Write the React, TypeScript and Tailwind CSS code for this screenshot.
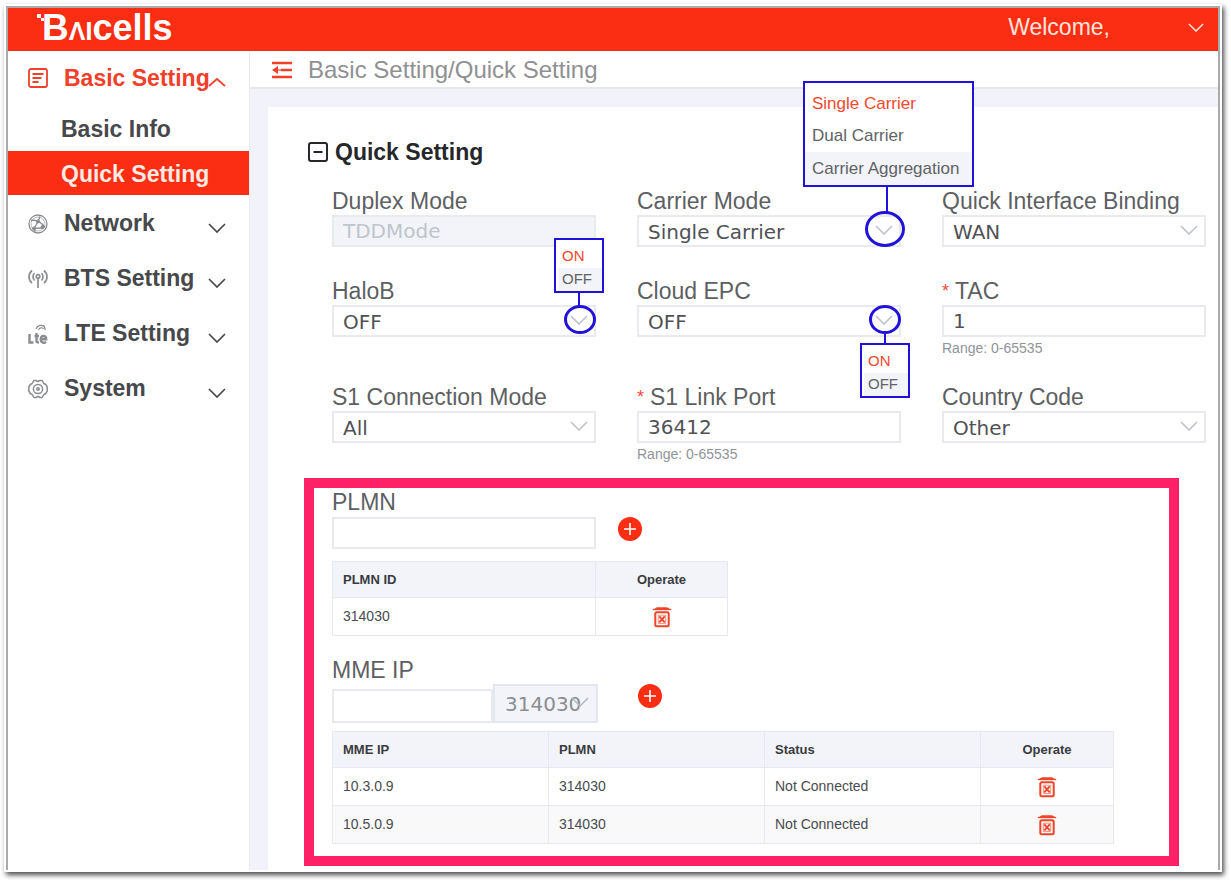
import { useId, type ReactNode } from "react";

function Chevron({ className, up }: { className?: string; up?: boolean }) {
  return (
    <svg viewBox="0 0 18 10" className={className} fill="none" stroke="currentColor" strokeWidth="1.7" aria-hidden="true">
      <path d={up ? "M1 9 9 2l8 7" : "M1 1l8 8 8-8"} />
    </svg>
  );
}

function ListIcon() {
  return (
    <svg viewBox="0 0 20 20" className="h-5 w-5" fill="none" stroke="currentColor" strokeWidth="1.8" aria-hidden="true">
      <rect x="1" y="1" width="18" height="18" rx="2" />
      <path d="M4.5 6h11M4.5 10h9M4.5 14h6" />
    </svg>
  );
}

function NetworkIcon() {
  return (
    <svg viewBox="0 0 20 20" className="h-5 w-5" fill="none" stroke="currentColor" strokeWidth="1.3" aria-hidden="true">
      <circle cx="10" cy="10" r="9" />
      <circle cx="10" cy="10" r="7" strokeWidth=".6" />
      <path d="M3 6.500c5-1 10 1 14 7M10 7.500 6 14.500M6 14.500l8-.5M10 7.500 12 2.500M6 14.500l1 3.500" />
      <circle cx="10" cy="7.500" r="1.300" fill="currentColor" />
      <circle cx="6" cy="14.500" r="1.300" fill="currentColor" />
      <circle cx="14.500" cy="13" r="1.300" fill="currentColor" />
    </svg>
  );
}

function AntennaIcon() {
  return (
    <svg viewBox="0 0 20 20" className="h-5 w-5" fill="none" stroke="currentColor" strokeWidth="1.7" aria-hidden="true">
      <circle cx="10" cy="7.500" r="1.800" />
      <path d="M10 9.500V19M6.500 4c-2 2-2 5.500 0 7.500M13.500 4c2 2 2 5.500 0 7.500M4 1.500c-4 3.500-4 9 0 12.500M16 1.500c4 3.500 4 9 0 12.500" />
    </svg>
  );
}

function LteIcon() {
  return (
    <svg viewBox="0 0 20 20" className="h-5 w-5" fill="none" stroke="currentColor" strokeWidth="2.400" aria-hidden="true">
      <path d="M1.500 10v8.500h4M8.500 9v8q0 1.500 2.500 1.500M6.500 12H11M13.500 15.300h4.700c0-4.500-5.400-4.500-5.400 0 0 4 3.700 3.800 5.400 2.700" />
      <path d="M8 5c1.500-4 6.500-5 9-1.500M10.500 6c1-2.500 3.500-3 5-1M15.500 1l2 5" strokeWidth="1.200" />
    </svg>
  );
}

function GearIcon() {
  return (
    <svg viewBox="0 0 20 20" className="h-5 w-5" fill="none" stroke="currentColor" strokeWidth="1.500" strokeLinejoin="round" aria-hidden="true">
      <path d="M5.800 1.500h2.200l2 1 2-1h2.200l1.600 3 1.900 1L19.200 8v4l-1.500 2.500-1.900 1-1.600 3H12l-2-1-2 1H5.800l-1.600-3-1.900-1L.8 12V8l1.500-2.500 1.900-1z" />
      <circle cx="10" cy="10" r="4.600" />
      <circle cx="10" cy="10" r="1.200" />
    </svg>
  );
}

function TrashIcon() {
  return (
    <svg viewBox="0 0 20 22" className="h-[22px] w-5" fill="none" stroke="currentColor" aria-hidden="true">
      <path d="M.8 3.800 5 1.200h10l4.200 2.600z" fill="currentColor" stroke="none" />
      <path d="M.8 3.500h18.400" strokeWidth="1.300" />
      <rect x="3.300" y="6.200" width="13.400" height="14" rx="1.500" strokeWidth="2" />
      <path d="M7.300 10.300l5.400 6M12.700 10.300l-5.400 6" strokeWidth="1.900" />
      <path d="M6.300 9.200h7.400v8.200H6.300z" strokeWidth=".6" />
    </svg>
  );
}

function AddButton({ label, className }: { label: string; className: string }) {
  return (
    <button type="button" aria-label={label} className={`grid h-6 w-6 place-items-center rounded-full bg-[#fb2d12] ${className}`}>
      <svg viewBox="0 0 12 12" className="h-3 w-3" stroke="#fff" strokeWidth="1.600" aria-hidden="true">
        <path d="M6 0v12M0 6h12" />
      </svg>
    </button>
  );
}

function Field({ label, required, hint, value, type, options, children }: {
  label: string;
  required?: boolean;
  hint?: string;
  value: string;
  type: "select" | "text" | "disabled";
  options?: string[];
  children?: ReactNode;
}) {
  const id = useId();
  const box = "h-8 w-full border-2 border-[#e9eaee] px-[9px] font-['DejaVu_Sans',sans-serif] text-[20px]";
  return (
    <div>
      <label htmlFor={id} className="flex h-7 items-center whitespace-nowrap text-[23px] text-[#5d5f63]">
        {required && <span className="mr-[6px] h-6 text-[18px] leading-6 text-[#f5483b]">*</span>}
        {label}
      </label>
      <div className="relative h-[33px]">
        {type === "select" ? (
          <>
            <select id={id} defaultValue={value} className={`${box} appearance-none bg-white text-[#505155]`}>
              {(options ?? [value]).map((o) => (
                <option key={o}>{o}</option>
              ))}
            </select>
            <Chevron className="pointer-events-none absolute top-[10px] right-2 h-[10px] w-[18px] text-[#c0c4cc]" />
          </>
        ) : (
          <input
            id={id}
            type="text"
            defaultValue={value}
            disabled={type === "disabled"}
            className={`${box} ${type === "disabled" ? "bg-[#f2f4f9] text-[#c0c4cc]" : "bg-white text-[#505155]"}`}
          />
        )}
        {children}
      </div>
      {hint && <p className="h-4 text-[14px] leading-5 text-[#909399]">{hint}</p>}
    </div>
  );
}

function ToggleOptions() {
  return (
    <ul className="flex h-full flex-col text-[15px]">
      <li className="flex flex-1 items-center pt-1 pl-1 text-[#f5482e]">ON</li>
      <li className="flex flex-1 items-center bg-[#f2f4f9] pl-1 text-[#606266]">OFF</li>
    </ul>
  );
}

const menu = [
  { name: "Network", icon: <NetworkIcon /> },
  { name: "BTS Setting", icon: <AntennaIcon /> },
  { name: "LTE Setting", icon: <LteIcon /> },
  { name: "System", icon: <GearIcon /> },
];

const mmeRows = [
  ["10.3.0.9", "314030", "Not Connected"],
  ["10.5.0.9", "314030", "Not Connected"],
];

const th = "border border-[#e6e9f1] bg-[#f2f4fa] px-[10px] text-left font-bold text-[13px] text-[#3a3b3f]";
const thCenter = "border border-[#e6e9f1] bg-[#f2f4fa] text-center font-bold text-[13px] text-[#3a3b3f]";
const td = "border border-[#e6e9f1] px-[10px] text-[14px] text-[#4a4b4f]";
const tdCenter = "border border-[#e6e9f1] text-center";

export default function App() {
  return (
    <div className="bg-white pt-[6px] pr-[11px] pb-[10px] pl-[6px] font-['Liberation_Sans',sans-serif]">
      <div className="border-2 border-b-0 border-[#aaaaaa] bg-white shadow-[0_0_0_2px_#fff,2px_3px_5px_2px_rgba(0,0,0,0.7)]">
        <header className="flex h-[43px] items-center justify-between bg-[#fb2d12] pr-[14px] pb-1 pl-[29px] text-white">
          <a href="#home" aria-label="Baicells" className="flex h-full items-center">
            <svg viewBox="0 0 7 12" className="-mr-[2px] mb-4 h-3 w-[7px]" fill="#fff" aria-hidden="true">
              <path d="M0 0h4v4H0zM4 4h3v3H4z" />
            </svg>
            <span className="flex items-baseline font-bold leading-none">
              <span className="text-[37px]">B</span>
              <span className="text-[25px]">Λ</span>
              <span className="text-[25px]">I</span>
              <span className="text-[36px]">cells</span>
            </span>
          </a>
          <button type="button" className="flex items-center gap-[78px] text-[23px] text-[#ffe3dc]">
            Welcome,
            <Chevron className="h-[9px] w-4" />
          </button>
        </header>

        <div className="flex">
          <nav className="w-[242px] shrink-0 border-r border-[#e9eaf2] bg-white text-[23px] font-bold text-[#47484b]">
            <button type="button" className="relative flex h-[54px] w-full items-center pl-5 text-[#f0402a]">
              <ListIcon />
              <span className="ml-4">Basic Setting</span>
              <Chevron up className="absolute right-[23px] bottom-[18px] h-[10px] w-[18px]" />
            </button>
            <a href="#basic-info" className="flex h-[46px] items-center pt-[2px] pl-[53px]">Basic Info</a>
            <a href="#quick-setting" className="flex h-11 items-center bg-[#fb2d12] pt-[2px] pl-[53px] text-[#ffe9e3]">Quick Setting</a>
            {menu.map((m) => (
              <button key={m.name} type="button" className="flex h-[55px] w-full items-center pt-[2px] pr-[23px] pl-5">
                <span className="text-[#8b8d91]">{m.icon}</span>
                <span className="ml-4 flex-1 text-left">{m.name}</span>
                <Chevron className="mt-2 h-[10px] w-[18px]" />
              </button>
            ))}
          </nav>

          <div className="flex min-w-0 flex-1 flex-col bg-[#f2f3fa]">
            <div className="flex h-[38px] items-center gap-4 border-b-2 border-[#e8e8ec] bg-white pt-[2px] pl-[22px] text-[24px] text-[#8f9093]">
              <button type="button" aria-label="Collapse menu" className="text-[#f0402a]">
                <svg viewBox="0 0 20 18" className="h-[18px] w-5" fill="none" stroke="currentColor" strokeWidth="2.600" aria-hidden="true">
                  <path d="M0 2h20M9 9h11M0 16h20" />
                  <path d="M0 9l6-4v8z" fill="currentColor" stroke="none" />
                  <path d="M5 9h4" strokeWidth="1.200" />
                </svg>
              </button>
              <span>Basic Setting/Quick Setting</span>
            </div>

            <main className="mt-[18px] ml-[18px] flex-1 bg-white pt-[30px] pb-1">
              <h1 className="flex h-[30px] items-center pl-10 text-[23px] font-bold text-[#26272a]">
                <button type="button" aria-label="Collapse section" className="mr-[7px]">
                  <svg viewBox="0 0 20 20" className="h-5 w-5" fill="none" stroke="currentColor" strokeWidth="2" aria-hidden="true">
                    <rect x="1" y="1" width="18" height="18" rx="2" />
                    <path d="M5.500 10h9" />
                  </svg>
                </button>
                Quick Setting
              </h1>

              <div className="mt-5 grid grid-cols-3 gap-x-[41px] gap-y-[29px] pr-3 pl-16">
                <Field label="Duplex Mode" value="TDDMode" type="disabled" />
                <Field label="Carrier Mode" value="Single Carrier" type="select" options={["Single Carrier", "Dual Carrier", "Carrier Aggregation"]}>
                  <div className="absolute -top-1 -right-1 h-9 w-10 rounded-[50%] border-[3px] border-[#2012d8]" />
                  <div className="absolute right-[13px] bottom-9 h-7 w-[2px] bg-[#2012d8]" />
                  <ul className="absolute -right-[73px] bottom-[61px] z-10 flex h-[106px] w-[171px] flex-col border-2 border-[#2012d8] bg-white pt-1 text-[17px] whitespace-nowrap text-[#606266]">
                    <li className="flex flex-1 items-center pl-[7px] text-[#f5482e]">Single Carrier</li>
                    <li className="flex flex-1 items-center pl-[7px]">Dual Carrier</li>
                    <li className="flex flex-1 items-center bg-[#f2f4f9] pl-[7px]">Carrier Aggregation</li>
                  </ul>
                </Field>
                <Field label="Quick Interface Binding" value="WAN" type="select" />

                <Field label="HaloB" value="OFF" type="select" options={["ON", "OFF"]}>
                  <div className="absolute top-0 right-0 h-[29px] w-8 rounded-[50%] border-[3px] border-[#2012d8]" />
                  <div className="absolute right-4 bottom-8 h-[15px] w-[2px] bg-[#2012d8]" />
                  <div className="absolute -right-2 bottom-[45px] z-10 h-[55px] w-[50px] border-2 border-[#2012d8] bg-white pl-[2px]">
                    <ToggleOptions />
                  </div>
                </Field>
                <Field label="Cloud EPC" value="OFF" type="select" options={["ON", "OFF"]}>
                  <div className="absolute top-0 right-0 h-[29px] w-8 rounded-[50%] border-[3px] border-[#2012d8]" />
                  <div className="absolute top-7 right-[15px] h-3 w-[2px] bg-[#2012d8]" />
                  <div className="absolute top-[38px] -right-[9px] z-10 h-[55px] w-[50px] border-2 border-[#2012d8] bg-white pl-[2px]">
                    <ToggleOptions />
                  </div>
                </Field>
                <Field label="TAC" required value="1" type="text" hint="Range: 0-65535" />

                <Field label="S1 Connection Mode" value="All" type="select" />
                <Field label="S1 Link Port" required value="36412" type="text" hint="Range: 0-65535" />
                <Field label="Country Code" value="Other" type="select" />
              </div>

              <section className="mt-[18px] mr-[39px] ml-9 border-[10px] border-[#ff2168] pr-[55px] pb-3 pl-[18px]">
                <label htmlFor="plmn" className="flex h-[29px] items-center text-[23px] text-[#5d5f63]">PLMN</label>
                <div className="flex items-start">
                  <input id="plmn" type="text" className="h-8 w-[264px] border-2 border-[#e9eaee] px-[10px]" />
                  <AddButton label="Add PLMN" className="ml-[22px]" />
                </div>
                <table className="mt-3 w-[396px] table-fixed border-collapse">
                  <thead>
                    <tr className="h-9">
                      <th className={th}>PLMN ID</th>
                      <th className={`${thCenter} w-[132px]`}>Operate</th>
                    </tr>
                  </thead>
                  <tbody>
                    <tr className="h-[38px]">
                      <td className={td}>314030</td>
                      <td className={tdCenter}>
                        <button type="button" aria-label="Delete PLMN" className="mx-auto block text-[#ee4528]"><TrashIcon /></button>
                      </td>
                    </tr>
                  </tbody>
                </table>

                <label htmlFor="mme" className="mt-5 flex h-7 items-center text-[23px] text-[#5d5f63]">MME IP</label>
                <div className="flex items-start">
                  <div className="flex w-[266px] items-end">
                    <input id="mme" type="text" className="h-[34px] min-w-0 flex-1 border-2 border-[#e9eaee] px-[10px]" />
                    <div className="relative">
                      <select aria-label="PLMN" disabled defaultValue="314030" className="block h-[39px] w-[105px] appearance-none border-2 border-[#e4e7f0] bg-[#f2f4fa] pl-[10px] font-['DejaVu_Sans',sans-serif] text-[20px] text-[#8b8d91] opacity-100">
                        <option>314030</option>
                      </select>
                      <svg viewBox="0 0 18 10" className="pointer-events-none absolute top-[13px] right-[9px] h-[10px] w-[18px]" fill="none" stroke="#b4b8c2" strokeWidth="1.500" aria-hidden="true">
                        <path d="M1 1l8 8 8-8" />
                      </svg>
                    </div>
                  </div>
                  <AddButton label="Add MME IP" className="ml-10" />
                </div>
                <table className="mt-2 w-full table-fixed border-collapse">
                  <thead>
                    <tr className="h-9">
                      <th className={th}>MME IP</th>
                      <th className={th}>PLMN</th>
                      <th className={th}>Status</th>
                      <th className={`${thCenter} w-[133px]`}>Operate</th>
                    </tr>
                  </thead>
                  <tbody>
                    {mmeRows.map((row) => (
                      <tr key={row[0]} className="h-[38px] even:bg-[#f9f9fa]">
                        {row.map((cell) => (
                          <td key={cell} className={td}>{cell}</td>
                        ))}
                        <td className={tdCenter}>
                          <button type="button" aria-label={`Delete ${row[0]}`} className="mx-auto block text-[#ee4528]"><TrashIcon /></button>
                        </td>
                      </tr>
                    ))}
                  </tbody>
                </table>
              </section>
            </main>
          </div>
        </div>
      </div>
    </div>
  );
}
